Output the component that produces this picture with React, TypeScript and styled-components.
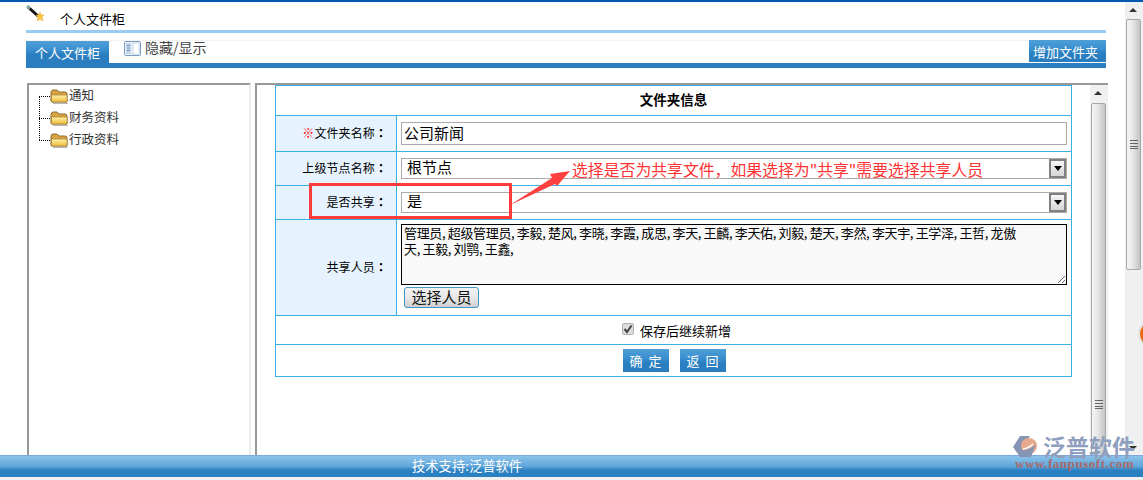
import styled, { createGlobalStyle } from "styled-components";

const GlobalStyle = createGlobalStyle`
  html, body {
    margin: 0;
    padding: 0;
    background: #ffffff;
    overflow: hidden;
  }
  * {
    box-sizing: border-box;
  }
  body {
    font-family: "Noto Sans CJK SC", "Liberation Sans", sans-serif;
    color: #000000;
  }
`;

const Page = styled.div`
  position: relative;
  width: 1143px;
  height: 480px;
  display: flex;
  flex-direction: column;
  border-top: 2px solid #0058b0;
  background: #f0f0f0;
  overflow: hidden;
`;
const Upper = styled.div`
  display: flex;
  height: 453px;
  background: #ffffff;
`;
const Main = styled.div`
  width: 1125px;
  padding: 0 19px 0 26px;
  display: flex;
  flex-direction: column;
`;
const TitleRow = styled.div`
  height: 28px;
  display: flex;
  align-items: flex-start;
`;
const TitleText = styled.span`
  margin: 8px 0 0 14px;
  font-size: 13px;
  line-height: 18px;
`;
const LightBar = styled.div`
  height: 3px;
  background: #99ccf0;
`;
const TabRow = styled.div`
  height: 23px;
  margin-top: 7px;
  display: flex;
  align-items: stretch;
  border-top: 1px solid #f2f2f2;
`;
const blueFace = `
  background: linear-gradient(#4f9fd8 0%, #3a8fcf 40%, #2a7fc0 60%, #2a7dbe 100%);
  color: #ffffff;
  font-size: 13px;
  display: flex;
  align-items: center;
  justify-content: center;
`;
const Tab = styled.div`
  ${blueFace}
  width: 83px;
`;
const ToggleLink = styled.div`
  margin-left: 15px;
  display: flex;
  align-items: flex-start;
  gap: 4px;
  font-size: 14px;
  line-height: 12px;
  color: #444444;
`;
const Spacer = styled.div`
  flex: 1;
`;
const AddButton = styled.div`
  ${blueFace}
  width: 77px;
  height: 22px;
  margin-top: -1px;
  padding-right: 4px;
`;
const BlueBar = styled.div`
  height: 5px;
  background: #2a7dbe;
`;
const PanelRow = styled.div`
  flex: 1;
  min-height: 0;
  margin: 15px -2px 0 1px;
  display: flex;
  gap: 4px;
`;
const TreePanel = styled.div`
  width: 224px;
  border-top: 2px solid #999999;
  border-left: 2px solid #999999;
  border-right: 2px solid #ececec;
  padding: 0 0 0 10px;
`;
const Tree = styled.div`
  position: relative;
  display: flex;
  flex-direction: column;
`;
const TreeLine = styled.div`
  position: absolute;
  left: 0;
  top: 11px;
  width: 1px;
  height: 44px;
  border-left: 1px dotted #000000;
`;
const TreeRow = styled.div`
  height: 22px;
  display: flex;
  align-items: center;
  font-size: 12.5px;
  color: #333333;
`;
const TreeDash = styled.span`
  width: 11px;
  height: 0;
  border-top: 1px dotted #000000;
`;
const TreeLabel = styled.span`
  padding-bottom: 4px;
`;
const FormPanel = styled.div`
  flex: 1;
  display: flex;
  border-top: 2px solid #999999;
  border-left: 2px solid #999999;
  overflow: hidden;
`;
const FormArea = styled.div`
  flex: 1;
  padding-left: 18px;
`;
const Form = styled.div`
  width: 797px;
  border: 1px solid #38b0e0;
`;
const HeadRow = styled.div`
  height: 29px;
  padding-bottom: 4px;
  display: flex;
  align-items: center;
  justify-content: center;
  font-size: 13.5px;
  font-weight: 700;
`;
const FieldRow = styled.div<{ $h: number }>`
  height: ${({ $h }) => $h}px;
  display: flex;
  border-top: 1px solid #38b0e0;
`;
const Label = styled.div`
  width: 121px;
  flex: none;
  padding: 0 9px 2px 0;
  display: flex;
  align-items: center;
  justify-content: flex-end;
  background: #e6f3ff;
  border-right: 1px solid #38b0e0;
  font-size: 12px;
  letter-spacing: 0.1px;
`;
const Required = styled.span`
  color: #ff0000;
`;
const Colon = styled.span`
  font-family: "Noto Sans CJK TC", sans-serif;
  font-weight: 700;
`;
const FieldCell = styled.div`
  flex: 1;
  padding: 4px 0 0 4px;
`;
const TextField = styled.input`
  display: block;
  width: 666px;
  height: 23px;
  margin-top: 2px;
  padding: 0 2px 2px;
  border: 1px solid #aaaaaa;
  background: #ffffff;
  outline: none;
  font: 15px "Noto Sans CJK SC", sans-serif;
  color: #000000;
`;
const SelectBox = styled.div`
  width: 666px;
  height: 21px;
  margin-top: 2px;
  padding-left: 5px;
  display: flex;
  align-items: center;
  justify-content: space-between;
  border: 1px solid #aaaaaa;
  font-size: 15px;
`;
const SelectValue = styled.span`
  padding-bottom: 4px;
`;
const SelectArrow = styled.div`
  width: 17px;
  height: 19px;
  display: flex;
  align-items: center;
  justify-content: center;
  border: 2px solid #808080;
  background: linear-gradient(#f6f6f6, #d6d6d6);
  &::after {
    content: "";
    border-top: 5px solid #000000;
    border-left: 4px solid transparent;
    border-right: 4px solid transparent;
  }
`;
const MemberBox = styled.textarea`
  display: block;
  width: 666px;
  height: 61px;
  padding: 0 2px;
  border: 1px solid #000000;
  border-radius: 0;
  outline: none;
  background: #f9f9f9;
  font-family: "Noto Sans CJK SC", sans-serif;
  font-size: 13px;
  line-height: 16px;
  letter-spacing: -0.35px;
  color: #000000;
  white-space: pre;
  overflow: hidden;
`;
const PickButton = styled.div`
  width: 75px;
  height: 21px;
  margin: 2px 0 0 3px;
  padding-bottom: 2px;
  display: flex;
  align-items: center;
  justify-content: center;
  border: 1px solid #3d95c8;
  border-radius: 3px;
  background: linear-gradient(#f2f2f2 0%, #e8e8e8 50%, #cfcfcf 100%);
  font-size: 15px;
  color: #111111;
`;
const CenterRow = styled.div<{ $h: number; $gap: number; $offset: number }>`
  height: ${({ $h }) => $h}px;
  display: flex;
  align-items: center;
  justify-content: center;
  gap: ${({ $gap }) => $gap}px;
  padding-left: ${({ $offset }) => $offset}px;
  border-top: 1px solid #38b0e0;
  font-size: 13px;
`;
const FakeCheck = styled.span`
  width: 12px;
  height: 12px;
  margin: -2px 0 0 -3px;
  display: flex;
  align-items: center;
  justify-content: center;
  border: 1px solid #b0b0b0;
  border-radius: 2px;
  background: #dddddd;
`;
const ActionButton = styled.div`
  ${blueFace}
  width: 46px;
  height: 23px;
  white-space: pre;
`;
const VScroll = styled.div<{ $w: number; $arrow: number }>`
  position: relative;
  flex: none;
  width: ${({ $w }) => $w}px;
  background: #f0f0f0;
  overflow: hidden;
  &::before {
    content: "";
    position: absolute;
    top: ${({ $arrow }) => $arrow}px;
    left: 4px;
    border-bottom: 4px solid #333333;
    border-left: 4px solid transparent;
    border-right: 4px solid transparent;
  }
`;
const Thumb = styled.div<{ $h: number; $mt: number }>`
  height: ${({ $h }) => $h}px;
  width: 15px;
  margin: ${({ $mt }) => $mt}px 0 0 1px;
  border: 1px solid #a8a8a8;
  border-radius: 2px;
  background: linear-gradient(90deg, #f4f4f4 0%, #e8e8e8 40%, #c4c4c4 100%);
  position: relative;
`;
const Grip = styled.div<{ $top: number }>`
  position: absolute;
  left: 3px;
  top: ${({ $top }) => $top}px;
  width: 8px;
  height: 9px;
  border-top: 1px solid #666666;
  border-bottom: 1px solid #666666;
  &::after {
    content: "";
    display: block;
    height: 2px;
    margin-top: 2px;
    border-top: 1px solid #666666;
    border-bottom: 1px solid #666666;
  }
`;
const DownMark = styled.span`
  position: absolute;
  left: 4px;
  top: 444px;
  border-top: 4px solid #333333;
  border-left: 4px solid transparent;
  border-right: 4px solid transparent;
`;
const OrangeBadge = styled.div`
  position: absolute;
  left: 1138px;
  top: 317px;
  width: 30px;
  height: 30px;
  border-radius: 50%;
  border: 2px solid #e4e4e4;
  background: #e86a10;
`;
const Footer = styled.div`
  height: 22px;
  padding: 2px 0 0 412px;
  border-top: 1px solid #7fa8e0;
  background: linear-gradient(#8cc2ea 0%, #5ea6da 50%, #2a80c0 68%, #2a80c0 100%);
  color: #ffffff;
  font-size: 13.3px;
  line-height: 16px;
`;
const RedFrame = styled.div`
  position: absolute;
  left: 309px;
  top: 181px;
  width: 203px;
  height: 36px;
  border: 3px solid #ff3b3b;
`;
const RedArrow = styled.svg`
  position: absolute;
  left: 505px;
  top: 163px;
`;
const RedNote = styled.div`
  position: absolute;
  left: 572px;
  top: 158px;
  font-size: 15.85px;
  line-height: 20px;
  color: #ff3333;
  white-space: nowrap;
`;
const Watermark = styled.div`
  position: absolute;
  left: 1013px;
  top: 433px;
  width: 124px;
  height: 40px;
  pointer-events: none;
`;
const BrandRow = styled.div`
  display: flex;
  align-items: center;
  gap: 5px;
`;
const BrandName = styled.span`
  font-size: 23px;
  line-height: 23px;
  font-weight: 700;
  color: #8fa0bf;
`;
const BrandUrl = styled.div`
  margin: -1px 0 0 2px;
  font: 700 13px/14px "Liberation Serif", serif;
  letter-spacing: 0.55px;
  color: #a8696a;
`;

const WandIcon = () => (
  <svg width="20" height="20" viewBox="0 0 20 20" style={{ marginTop: 3 }}>
    <path d="M2 2 L12 11" stroke="#111" strokeWidth="3" />
    <path d="M1 1 L4 3.5" stroke="#8aa" strokeWidth="3" />
    <path
      d="M14 7l1 3 3 0-2 2 1 4-3-2-3 2 1-4-2-2 3 0z"
      fill="#f7c83a"
      stroke="#f0a030"
      strokeWidth="0.5"
    />
  </svg>
);

const PanelIcon = () => (
  <svg width="17" height="15" viewBox="0 0 17 15">
    <rect x="0.5" y="0.5" width="16" height="14" rx="1" fill="#e8f0fa" stroke="#7d9cc4" />
    <rect x="2" y="2" width="5" height="11" fill="#c6d7ec" />
    <rect x="9" y="2" width="6" height="11" fill="#ffffff" stroke="#a8bcd8" strokeWidth="0.5" />
    <path d="M3 4.5h3M3 7h3M3 9.5h3" stroke="#6f8fb8" />
  </svg>
);

const FolderIcon = () => (
  <svg width="19" height="15" viewBox="0 0 19 15">
    <defs>
      <linearGradient id="folderFace" x1="0" y1="0" x2="0" y2="1">
        <stop offset="0" stopColor="#fff3a8" />
        <stop offset="1" stopColor="#f0bb3c" />
      </linearGradient>
    </defs>
    <path d="M1 4 Q1 1 3 1 H7 L9 3 H15 Q17 3 17 5 V13 H2 Q1 13 1 12 Z" fill="#d9a441" stroke="#8a6a30" />
    <path d="M1.5 6 H17 V13 H2.5 Q1.5 13 1.5 12 Z" fill="url(#folderFace)" stroke="#a07c30" strokeWidth="0.7" />
    <path d="M3 14.5 H18" stroke="#b8b8b8" />
  </svg>
);

const TickIcon = () => (
  <svg width="10" height="10" viewBox="0 0 10 10">
    <path d="M1.5 5 L4 8 L8.5 1.5" fill="none" stroke="#444" strokeWidth="2" />
  </svg>
);

const BrandMark = () => (
  <svg width="25" height="22" viewBox="0 0 25 22">
    <path d="M7 0 H17 L10 11 L15 21 H7 L0 11 Z" fill="#8795b4" />
    <circle cx="16" cy="10" r="8" fill="#e8a98c" />
    <path d="M8 14 Q16 15 23 8 L18 21 H12 Z" fill="#8795b4" />
    <path d="M10 13 Q16 12 20 8" stroke="#ffffff" strokeWidth="1.5" fill="none" />
  </svg>
);

const folders = ["通知", "财务资料", "行政资料"];
const members =
  "管理员, 超级管理员, 李毅, 楚风, 李晓, 李霞, 成思, 李天, 王麟, 李天佑, 刘毅, 楚天, 李然, 李天宇, 王学泽, 王哲, 龙傲\n天, 王毅, 刘鹗, 王鑫,";

const App = () => {
  return (
    <Page>
      <GlobalStyle />
      <Upper>
        <Main>
          <TitleRow>
            <WandIcon />
            <TitleText>个人文件柜</TitleText>
          </TitleRow>
          <LightBar />
          <TabRow>
            <Tab>个人文件柜</Tab>
            <ToggleLink>
              <PanelIcon />
              隐藏/显示
            </ToggleLink>
            <Spacer />
            <AddButton>增加文件夹</AddButton>
          </TabRow>
          <BlueBar />
          <PanelRow>
            <TreePanel>
              <Tree>
                <TreeLine />
                {folders.map((name) => (
                  <TreeRow key={name}>
                    <TreeDash />
                    <FolderIcon />
                    <TreeLabel>{name}</TreeLabel>
                  </TreeRow>
                ))}
              </Tree>
            </TreePanel>
            <FormPanel>
              <FormArea>
                <Form>
                  <HeadRow>文件夹信息</HeadRow>
                  <FieldRow $h={36}>
                    <Label>
                      <Required>※</Required>文件夹名称<Colon>：</Colon>
                    </Label>
                    <FieldCell>
                      <TextField value="公司新闻" readOnly />
                    </FieldCell>
                  </FieldRow>
                  <FieldRow $h={34}>
                    <Label>上级节点名称<Colon>：</Colon></Label>
                    <FieldCell>
                      <SelectBox>
                        <SelectValue>根节点</SelectValue>
                        <SelectArrow />
                      </SelectBox>
                    </FieldCell>
                  </FieldRow>
                  <FieldRow $h={34}>
                    <Label>是否共享<Colon>：</Colon></Label>
                    <FieldCell>
                      <SelectBox>
                        <SelectValue>是</SelectValue>
                        <SelectArrow />
                      </SelectBox>
                    </FieldCell>
                  </FieldRow>
                  <FieldRow $h={96}>
                    <Label>共享人员<Colon>：</Colon></Label>
                    <FieldCell>
                      <MemberBox value={members} readOnly />
                      <PickButton>选择人员</PickButton>
                    </FieldCell>
                  </FieldRow>
                  <CenterRow $h={29} $gap={6} $offset={9}>
                    <FakeCheck>
                      <TickIcon />
                    </FakeCheck>
                    保存后继续新增
                  </CenterRow>
                  <CenterRow $h={32} $gap={11} $offset={1}>
                    <ActionButton>确  定</ActionButton>
                    <ActionButton>返  回</ActionButton>
                  </CenterRow>
                </Form>
              </FormArea>
              <VScroll $w={18} $arrow={6}>
                <Thumb $h={420} $mt={18}>
                  <Grip $top={296} />
                </Thumb>
              </VScroll>
            </FormPanel>
          </PanelRow>
        </Main>
        <VScroll $w={18} $arrow={6}>
          <Thumb $h={251} $mt={17}>
            <Grip $top={120} />
          </Thumb>
          <DownMark />
        </VScroll>
      </Upper>
      <Footer>技术支持:泛普软件</Footer>
      <OrangeBadge />
      <RedFrame />
      <RedArrow width="70" height="45" viewBox="0 0 70 45">
        <polygon points="5,40 47,13 45,9 65,6 52,21 50,19" fill="#ff4040" />
      </RedArrow>
      <RedNote>选择是否为共享文件，如果选择为"共享"需要选择共享人员</RedNote>
      <Watermark>
        <BrandRow>
          <BrandMark />
          <BrandName>泛普软件</BrandName>
        </BrandRow>
        <BrandUrl>www.fanpusoft.com</BrandUrl>
      </Watermark>
    </Page>
  );
};

export default App;
